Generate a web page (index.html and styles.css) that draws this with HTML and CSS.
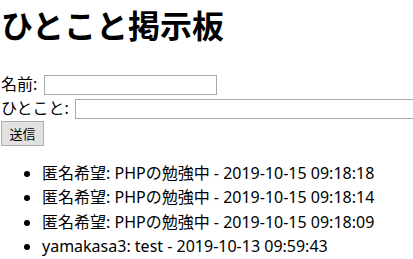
FILE: index.html
```html
<!DOCTYPE html>
<html lang="ja">
<head>
<meta charset="utf-8">
<title>ひとこと掲示板</title>
<link rel="stylesheet" href="styles.css">
</head>
<body>
<h1 class="title">ひとこと掲示板</h1>
<form class="post-form">
  <div class="row"><label class="label" for="name">名前:</label><input class="field field-name" id="name" type="text"></div>
  <div class="row"><label class="label" for="msg">ひとこと:</label><input class="field field-msg" id="msg" type="text"></div>
  <div class="row-btn"><button class="submit" type="button">送信</button></div>
</form>
<ul class="posts">
  <li>匿名希望: PHPの勉強中 - 2019-10-15 09:18:18</li>
  <li>匿名希望: PHPの勉強中 - 2019-10-15 09:18:14</li>
  <li>匿名希望: PHPの勉強中 - 2019-10-15 09:18:09</li>
  <li>yamakasa3: test - 2019-10-13 09:59:43</li>
</ul>
</body>
</html>
```
FILE: styles.css
```css
html, body {
  margin: 0;
  padding: 0;
  background: #fff;
  overflow: hidden;
}
body {
  font-family: "Noto Sans", "Noto Sans CJK JP", sans-serif;
  font-size: 16px;
  color: #000;
}
.title {
  font-family: "Noto Sans CJK JP", sans-serif;
  font-size: 32px;
  font-weight: bold;
  line-height: 48px;
  margin: 0 0 24px 0;
  padding-left: 1px;
  white-space: nowrap;
}
.post-form {
  margin: 0;
}
.row {
  display: flex;
  align-items: flex-start;
  height: 24px;
  white-space: nowrap;
}
.label {
  line-height: 24px;
  padding-left: 1px;
  margin-right: 4px;
}
.field {
  box-sizing: border-box;
  height: 20px;
  border: 1px solid #a9a9a9;
  padding: 1px 2px;
  margin: 3px 0 0 0;
  font: inherit;
  font-size: 13px;
  flex: none;
}
.field-name {
  width: 173px;
  margin-left: 3px;
}
.field-msg {
  width: 400px;
  margin-left: 2px;
}
.row-btn {
  padding-top: 1px;
}
.submit {
  box-sizing: border-box;
  margin: 0 0 0 1px;
  width: 43px;
  height: 25px;
  background: #e1e1e1;
  border: 1px solid #adadad;
  border-radius: 0;
  font-family: "Noto Sans CJK JP", sans-serif;
  font-size: 13px;
  color: #000;
  padding: 0;
}
.posts {
  margin: 15px 0 0 0;
  padding-left: 42px;
}
.posts li {
  line-height: 24.4px;
  white-space: nowrap;
}
```
